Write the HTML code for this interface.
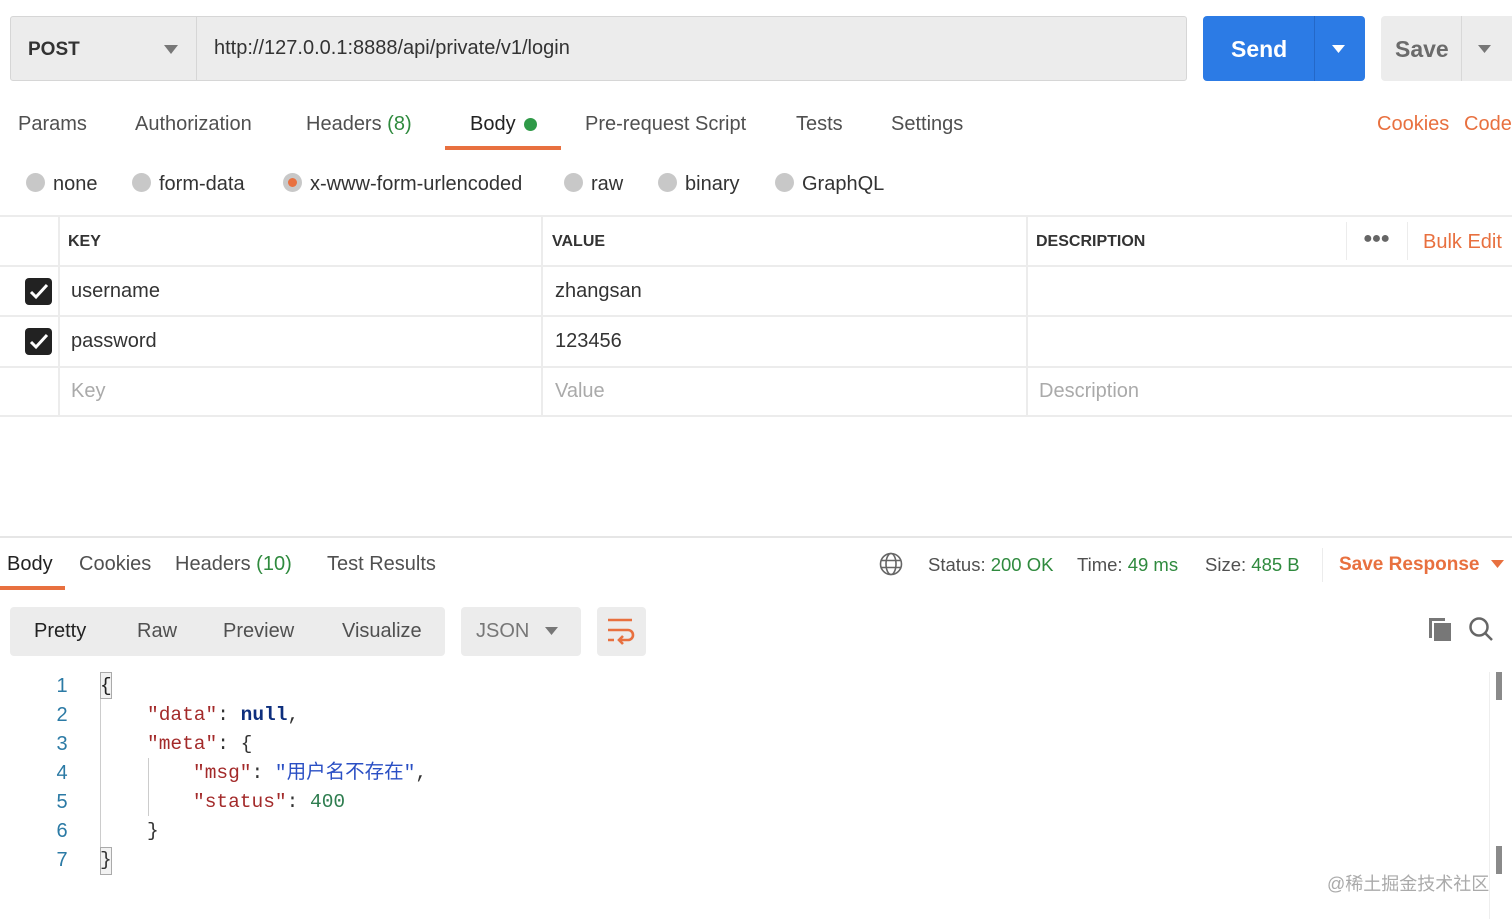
<!DOCTYPE html>
<html><head><meta charset="utf-8"><style>
*{margin:0;padding:0;box-sizing:border-box}
body{width:1512px;height:919px;background:#fff;position:relative;overflow:hidden;font-family:"Liberation Sans","Noto Sans CJK SC",sans-serif;color:#333}
.a{position:absolute;white-space:nowrap}
.t{font-size:20px;line-height:26px;color:#505050}
.gr{color:#2f8a3e}
.rad{position:absolute;width:19px;height:19px;border-radius:50%;background:#c8c8c8}
.hl{position:absolute;left:0;width:1512px;height:2px;background:#ececec}
.vl{position:absolute;width:2px;background:#ececec}
.cb{position:absolute;left:25px;width:27px;height:27px;background:#222;border-radius:4px}
.mono{font-family:"Liberation Mono","Noto Sans CJK SC",monospace;font-size:19.5px;line-height:29px}
.ln{position:absolute;left:50px;width:24px;text-align:center;color:#2b7aa5;font-size:20px;line-height:29px}
.s{color:#a32a2a}
</style></head><body>
<div class="a" style="left:10px;top:16px;width:1177px;height:65px;background:#ececec;border:1px solid #d6d6d6;border-radius:3px"></div>
<div class="a" style="left:196px;top:17px;width:1px;height:63px;background:#d6d6d6"></div>
<div class="a" style="left:28px;top:37px;font-size:19px;line-height:26px;color:#333;font-weight:bold">POST</div>
<svg class="a" style="left:164px;top:45px" width="14" height="9"><path d="M0 0h14L7 9z" fill="#777"/></svg>
<div class="a" style="left:214px;top:35px;font-size:20px;line-height:26px;color:#333">http://127.0.0.1:8888/api/private/v1/login</div>
<div class="a" style="left:1203px;top:16px;width:162px;height:65px;background:#2c7be5;border-radius:4px"></div>
<div class="a" style="left:1314px;top:16px;width:1px;height:65px;background:#2468c8"></div>
<div class="a" style="left:1231px;top:35px;font-size:23px;line-height:28px;color:#fff;font-weight:bold">Send</div>
<svg class="a" style="left:1332px;top:45px" width="13" height="8"><path d="M0 0h13L6.5 8z" fill="#fff"/></svg>
<div class="a" style="left:1381px;top:16px;width:140px;height:65px;background:#ececec;border-radius:4px"></div>
<div class="a" style="left:1461px;top:16px;width:1px;height:65px;background:#d8d8d8"></div>
<div class="a" style="left:1395px;top:35px;font-size:23px;line-height:28px;color:#6b6b6b;font-weight:bold">Save</div>
<svg class="a" style="left:1478px;top:45px" width="13" height="8"><path d="M0 0h13L6.5 8z" fill="#777"/></svg>
<div class="a t" style="left:18px;top:111px">Params</div>
<div class="a t" style="left:135px;top:111px">Authorization</div>
<div class="a t" style="left:306px;top:111px">Headers <span class="gr">(8)</span></div>
<div class="a t" style="left:470px;top:111px;color:#222">Body</div>
<div class="a" style="left:524px;top:118px;width:13px;height:13px;border-radius:50%;background:#2f9a48"></div>
<div class="a" style="left:445px;top:146px;width:116px;height:4px;background:#e8703f"></div>
<div class="a t" style="left:585px;top:111px">Pre-request Script</div>
<div class="a t" style="left:796px;top:111px">Tests</div>
<div class="a t" style="left:891px;top:111px">Settings</div>
<div class="a t" style="left:1377px;top:111px;color:#e8703f">Cookies</div>
<div class="a t" style="left:1464px;top:111px;color:#e8703f">Code</div>
<div class="rad" style="left:26px;top:173px"></div><div class="a t" style="left:53px;top:171px;color:#333">none</div>
<div class="rad" style="left:132px;top:173px"></div><div class="a t" style="left:159px;top:171px;color:#333">form-data</div>
<div class="rad" style="left:283px;top:173px"></div><div class="a" style="left:288px;top:178px;width:9px;height:9px;border-radius:50%;background:#e8703f"></div>
<div class="a t" style="left:310px;top:171px;color:#333">x-www-form-urlencoded</div>
<div class="rad" style="left:564px;top:173px"></div><div class="a t" style="left:591px;top:171px;color:#333">raw</div>
<div class="rad" style="left:658px;top:173px"></div><div class="a t" style="left:685px;top:171px;color:#333">binary</div>
<div class="rad" style="left:775px;top:173px"></div><div class="a t" style="left:802px;top:171px;color:#333">GraphQL</div>
<div class="hl" style="top:215px"></div><div class="hl" style="top:265px"></div><div class="hl" style="top:315px"></div><div class="hl" style="top:366px"></div><div class="hl" style="top:415px"></div>
<div class="vl" style="left:58px;top:216px;height:200px"></div>
<div class="vl" style="left:541px;top:216px;height:200px"></div>
<div class="vl" style="left:1026px;top:216px;height:200px"></div>
<div class="vl" style="left:1346px;top:222px;height:38px;width:1px"></div>
<div class="vl" style="left:1407px;top:222px;height:38px;width:1px"></div>
<div class="a" style="left:68px;top:232px;font-size:16px;line-height:20px;font-weight:bold;color:#333">KEY</div>
<div class="a" style="left:552px;top:232px;font-size:16px;line-height:20px;font-weight:bold;color:#333">VALUE</div>
<div class="a" style="left:1036px;top:232px;font-size:16px;line-height:20px;font-weight:bold;color:#333">DESCRIPTION</div>
<div class="a" style="left:1363px;top:230px;font-size:16px;color:#666;letter-spacing:-1px">●●●</div>
<div class="a t" style="left:1423px;top:229px;color:#e8703f">Bulk Edit</div>
<div class="cb" style="top:278px"></div><svg class="a" style="left:29px;top:283px" width="20" height="17"><path d="M2 9l5 5L18 2" stroke="#fff" stroke-width="3" fill="none"/></svg>
<div class="cb" style="top:328px"></div><svg class="a" style="left:29px;top:333px" width="20" height="17"><path d="M2 9l5 5L18 2" stroke="#fff" stroke-width="3" fill="none"/></svg>
<div class="a t" style="left:71px;top:278px;color:#333">username</div>
<div class="a t" style="left:555px;top:278px;color:#333">zhangsan</div>
<div class="a t" style="left:71px;top:328px;color:#333">password</div>
<div class="a t" style="left:555px;top:328px;color:#333">123456</div>
<div class="a t" style="left:71px;top:378px;color:#aaa">Key</div>
<div class="a t" style="left:555px;top:378px;color:#aaa">Value</div>
<div class="a t" style="left:1039px;top:378px;color:#aaa">Description</div>
<div class="hl" style="top:536px;height:2px;background:#e6e6e6"></div>
<div class="a t" style="left:7px;top:551px;color:#222">Body</div>
<div class="a" style="left:0;top:586px;width:65px;height:4px;background:#e8703f"></div>
<div class="a t" style="left:79px;top:551px">Cookies</div>
<div class="a t" style="left:175px;top:551px">Headers <span class="gr">(10)</span></div>
<div class="a t" style="left:327px;top:551px">Test Results</div>
<svg class="a" style="left:879px;top:552px" width="24" height="24" fill="none" stroke="#666" stroke-width="1.6"><circle cx="12" cy="12" r="10.5"/><ellipse cx="12" cy="12" rx="5" ry="10.5"/><path d="M2 8.5h20M2 15.5h20"/></svg>
<div class="a t" style="left:928px;top:552px;font-size:18.5px">Status: <span class="gr">200 OK</span></div>
<div class="a t" style="left:1077px;top:552px;font-size:18.5px">Time: <span class="gr">49 ms</span></div>
<div class="a t" style="left:1205px;top:552px;font-size:18.5px">Size: <span class="gr">485 B</span></div>
<div class="vl" style="left:1322px;top:548px;height:34px;width:1px"></div>
<div class="a t" style="left:1339px;top:552px;color:#e8703f;font-weight:bold;font-size:19px">Save Response</div>
<svg class="a" style="left:1491px;top:560px" width="13" height="8"><path d="M0 0h13L6.5 8z" fill="#e8703f"/></svg>
<div class="a" style="left:10px;top:607px;width:435px;height:49px;background:#ececec;border-radius:4px"></div>
<div class="a t" style="left:34px;top:618px;color:#222">Pretty</div>
<div class="a t" style="left:137px;top:618px">Raw</div>
<div class="a t" style="left:223px;top:618px">Preview</div>
<div class="a t" style="left:342px;top:618px">Visualize</div>
<div class="a" style="left:461px;top:607px;width:120px;height:49px;background:#ececec;border-radius:4px"></div>
<div class="a t" style="left:476px;top:618px;color:#777">JSON</div>
<svg class="a" style="left:545px;top:627px" width="13" height="8"><path d="M0 0h13L6.5 8z" fill="#777"/></svg>
<div class="a" style="left:597px;top:607px;width:49px;height:49px;background:#ececec;border-radius:4px"></div>
<svg class="a" style="left:606px;top:616px" width="30" height="30" fill="none" stroke="#e8703f" stroke-width="2.6"><path d="M2 4h24M2 14h20a5 5 0 0 1 0 10h-8M17 20l-4 4 4 4M2 24h6"/></svg>
<svg class="a" style="left:1427px;top:616px" width="26" height="26"><path d="M2 2h16v3H5v17H2z" fill="#777"/><rect x="7" y="7" width="17" height="18" fill="#777"/></svg>
<svg class="a" style="left:1468px;top:616px" width="26" height="26" fill="none" stroke="#666" stroke-width="2.5"><circle cx="11" cy="11" r="8.5"/><path d="M17 17l7 7"/></svg>
<div class="ln" style="top:672px">1</div><div class="ln" style="top:701px">2</div><div class="ln" style="top:730px">3</div><div class="ln" style="top:759px">4</div><div class="ln" style="top:788px">5</div><div class="ln" style="top:817px">6</div><div class="ln" style="top:846px">7</div>
<div class="a" style="left:100px;top:672px;width:12px;height:27px;border:1px solid #aaa;background:#f2f2f2"></div>
<div class="a" style="left:100px;top:847px;width:12px;height:28px;border:1px solid #aaa;background:#f2f2f2"></div>
<div class="a" style="left:100px;top:699px;width:1px;height:148px;background:#ccc"></div>
<div class="a" style="left:148px;top:758px;width:1px;height:58px;background:#ccc"></div>
<div class="a mono" style="left:100px;top:672px;color:#222">{</div>
<div class="a mono" style="left:147px;top:701px"><span class="s">"data"</span>: <b style="color:#0d2e7d">null</b>,</div>
<div class="a mono" style="left:147px;top:730px"><span class="s">"meta"</span>: {</div>
<div class="a mono" style="left:193px;top:759px"><span class="s">"msg"</span>: <span style="color:#2a4fc4">"用户名不存在"</span>,</div>
<div class="a mono" style="left:193px;top:788px"><span class="s">"status"</span>: <span style="color:#2e7d4f">400</span></div>
<div class="a mono" style="left:147px;top:817px">}</div>
<div class="a mono" style="left:100px;top:846px">}</div>
<div class="a" style="left:1489px;top:672px;width:1px;height:247px;background:#eee"></div>
<div class="a" style="left:1496px;top:672px;width:6px;height:28px;background:#8a8a8a"></div>
<div class="a" style="left:1496px;top:846px;width:6px;height:28px;background:#8a8a8a"></div>
<div class="a" style="left:1327px;top:873px;font-size:18px;line-height:22px;color:#aaa">@稀土掘金技术社区</div>
</body></html>
